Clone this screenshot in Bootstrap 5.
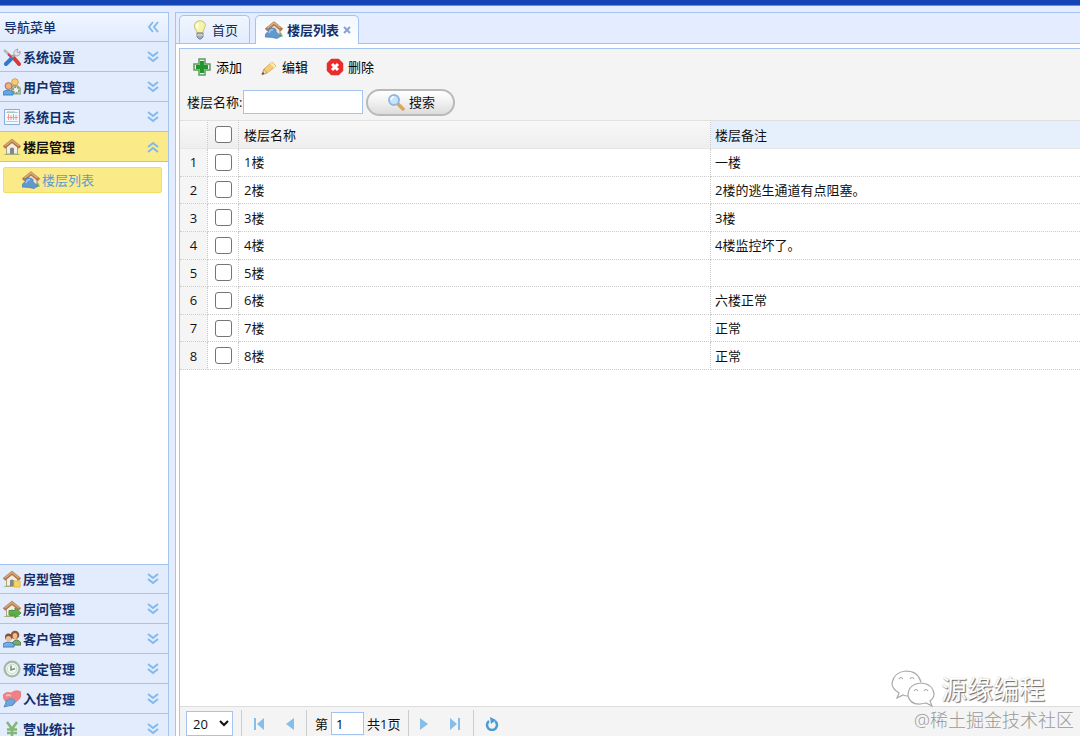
<!DOCTYPE html>
<html lang="zh-CN">
<head>
<meta charset="utf-8">
<meta name="viewport" content="width=device-width, initial-scale=1">
<title>楼层列表</title>
<link href="https://cdn.jsdelivr.net/npm/bootstrap@5.3.0/dist/css/bootstrap.min.css" rel="stylesheet">
<style>
  :root { --line: #a3c4ee; --sky: #e3edff; --navy: #12306b; }
  body { font: 13px/20px "Open Sans", "Noto Sans CJK SC", sans-serif; color: #111; background: var(--sky); }
  .app-shell { height: 100vh; }
  .top-strip { height: 6px; flex: none; background: #1346b4; border-bottom: 1px solid #6b8fd6; }
  .app-main { padding-top: 6px; gap: 6px; min-height: 0; margin-bottom: -9px; }
  svg { display: block; flex: none; }

  /* navigation */
  .side-nav { width: 169px; flex: none; border: 1px solid var(--line); border-left: 0; background: #fff; }
  .side-title, .side-item { height: 30px; width: 100%; padding: 0 9px 0 3px; border: 0; border-bottom: 1px solid var(--line); color: var(--navy); font-weight: 700; }
  .side-title { height: 29px; padding-left: 4px; background: linear-gradient(#f1f6ff, #e0ebfd); font-weight: 500; }
  .side-item { background: #e2ecfd; gap: 2px; font-weight: 600; }
  .side-item.open { background: #fbeb88; color: #111; }
  .side-last { border-top: 1px solid var(--line); }
  .side-body { padding: 5px 6px 0 3px; }
  .side-link { height: 26px; padding-left: 18px; gap: 2px; background: #fbeb88; border: 1px solid #f3de62; border-radius: 2px; color: #5b9bd0; text-decoration: none; }
  .chev { stroke: #82b9ee; fill: none; stroke-width: 2; }
  .icon-btn { border: 0; background: none; padding: 0; }

  /* tabs */
  .work { border: 1px solid var(--line); border-right: 0; background: #fff; min-width: 0; }
  .tab-strip { height: 31px; flex: none; padding: 2px 0 0 3px; gap: 5px; background: #e3edff; border-bottom: 1px solid var(--line); }
  .tab-strip .nav-link { height: 28px; border: 1px solid var(--line); border-bottom: 0; border-radius: 5px 5px 0 0; padding: 0 11px; gap: 3px; background: linear-gradient(#f1f6ff, #e2ecfd); color: #1a2a50; }
  .tab-strip .nav-link.active { height: 29px; margin-bottom: -1px; padding: 0 7px 0 9px; gap: 4px; background: linear-gradient(#f1f6ff, #fff); color: var(--navy); font-weight: 600; }
  .sheet { margin: 4px 0 0 3px; border: 1px solid var(--line); border-width: 1px 0 0 1px; min-height: 0; }

  /* toolbar */
  .tools { background: #f4f4f4; padding: 3px 7px; height: 71px; flex: none; }
  .tool-row { height: 30px; padding-left: 5px; gap: 18px; }
  .tool-row button { gap: 4px; }
  .find-row { height: 32px; gap: 3px; padding-top: 8px; }
  .find-row input { width: 120px; height: 24px; border: 1px solid var(--line); padding: 0 4px; margin-left: -2px; }
  .find-btn { width: 89px; height: 27px; border: 2px solid #b9b9b9; border-radius: 14px; background: linear-gradient(#fff, #f0f0f0 50%, #dcdcdc); gap: 4px; color: #111; }

  /* grid */
  .grid-table { width: 100%; height: 250px; table-layout: fixed; border-collapse: separate; border-spacing: 0; }
  .grid-table td, .grid-table th { padding: 0 5px; font-weight: 400; border-right: 1px dotted #ccc; border-bottom: 1px dotted #ccc; vertical-align: middle; line-height: 20px; }
  .grid-table tr > :last-child { border-right: 0; padding-left: 4px; }
  .grid-table thead th { height: 29px; background: linear-gradient(#f8f8f8, #eee); border-bottom: 1px solid #e6e6e6; border-top: 1px solid #e0e0e0; }
  .grid-table thead th.hot { background: #e6f0fd; }
  .grid-table .num { background: #f5f5f5; text-align: center; padding: 0; }
  .grid-table .tick { text-align: center; padding: 0; }
  .grid-table .form-check-input { width: 17px; height: 17px; margin: 0; display: block; margin-inline: auto; border: 1px solid #757575; border-radius: 3px; }
  .col-num { width: 28px; } .col-tick { width: 31px; } .col-name { width: 472px; }

  /* pager */
  .pager { height: 38px; flex: none; padding: 0 6px 4px; background: #f4f4f4; border-top: 1px solid #ddd; }
  .pager select { width: 47px; height: 25px; border: 1px solid var(--line); background: #fff; padding: 0 2px; font-size: 13px; color: #111; }
  .pager input { width: 33px; height: 23px; border: 1px solid var(--line); padding: 0 4px; margin: 0 3px; }
  .pager .rule { width: 1px; height: 27px; background: #ccc; margin: 0 8px; }
  .pager .step { padding: 0 4px; }
  .pager .rule + .step { padding-left: 3px; }
  .pager .step + .step { margin-left: 13px; }
  .pager svg { fill: #85bfe9; }

  .stamp { position: absolute; right: 6px; bottom: 4px; text-align: right; pointer-events: none; }
  .stamp-name { font-size: 26px; line-height: 36px; color: #fff; padding-right: 29px; gap: 6px; text-shadow: 1px 1px 1px #666, 0 0 1px #aaa; }
  .stamp-site { font-size: 18px; line-height: 24px; color: #999; font-weight: 300; }
</style>
</head>
<body>
<svg width="0" height="0" class="position-absolute" aria-hidden="true">
  <defs>
    <symbol id="down" viewBox="0 0 12 12"><path d="M1 1l5 4 5-4M1 6l5 4 5-4"/></symbol>
    <symbol id="up" viewBox="0 0 12 12"><path d="M1 6l5-4 5 4M1 11l5-4 5 4"/></symbol>
    <symbol id="home" viewBox="0 0 18 18">
      <path d="M0 17q9-5 18 0z" fill="#8bbf62"/>
      <path d="M3.500 8.500L9 4l5.500 4.500V16h-11z" fill="#f5efe3" stroke="#b39f8c"/>
      <path d="M7 10.500q2-2 4 0V16H7z" fill="#85858f"/>
      <path d="M1 9.500L9 3l8 6.500" fill="none" stroke="#ad7a4c" stroke-width="3.500"/>
      <path d="M2 8L9 2.500 16 8" fill="none" stroke="#d9a873" stroke-width="1.500"/>
    </symbol>
    <symbol id="homeblue" viewBox="0 0 18 18">
      <path d="M9 16.500l9-1-2-4z" fill="#79b56a"/>
      <path d="M4 8l6-5 5 5v7H4z" fill="#eee3d3" stroke="#9d8a80"/>
      <path d="M1 9L9 2.500 17 9" fill="none" stroke="#b07a4d" stroke-width="3.500"/>
      <path d="M2.500 7L9 2l6.500 5" fill="none" stroke="#dfae79" stroke-width="1.500"/>
      <path d="M0 16q0-4 3-5 0-5 4-4 5 0 4 4l5 4-4 2.500q-5-1.500-12-1.500z" fill="#6098d0" stroke="#4c7fb3" stroke-width=".7"/>
      <path d="M4 12q1-4 4-3" fill="none" stroke="#a6c9ec" stroke-width="1.500"/>
    </symbol>
  </defs>
</svg>
<div class="app-shell d-flex flex-column overflow-hidden position-relative">
  <div class="top-strip"></div>
  <div class="app-main d-flex flex-grow-1">
    <nav class="side-nav d-flex flex-column" aria-label="导航菜单">
      <div class="side-title d-flex align-items-center justify-content-between">
        <span>导航菜单</span>
        <button class="icon-btn" aria-label="收起"><svg class="chev" width="12" height="12" viewBox="0 0 12 12"><path d="M6 1L2 6l4 5M11 1L7 6l4 5"/></svg></button>
      </div>
      <button class="side-item d-flex align-items-center">
        <svg width="18" height="18" viewBox="0 0 18 18"><path d="M1 2l9 8" stroke="#b5b5bb" stroke-width="2.500"/><path d="M10 9l6 7" stroke="#d63c35" stroke-width="4" stroke-linecap="round"/><path d="M9 10l-6 6" stroke="#3478d0" stroke-width="4" stroke-linecap="round"/><path d="M5 6l3 3" stroke="#d63c35" stroke-width="2"/><path d="M11 7q-1-5 4-6l-1 3 2 1 1-2q1 5-4 5z" fill="#e4e4e4" stroke="#999" stroke-width=".8"/><path d="M9 9l3-2" stroke="#aaa" stroke-width="2"/></svg>
        <span>系统设置</span><svg class="chev ms-auto" width="12" height="12"><use href="#down"/></svg>
      </button>
      <button class="side-item d-flex align-items-center">
        <svg width="18" height="18" viewBox="0 0 18 18"><circle cx="12" cy="4" r="3.300" fill="#f4cd7a" stroke="#d5a24b"/><path d="M9 8q6-2 9 3v5H8z" fill="#b5c5a8" stroke="#8da080"/><circle cx="13" cy="12" r="3" fill="#eee" stroke="#789578" stroke-width="1.500" stroke-dasharray="2 1"/><circle cx="5.500" cy="8" r="3.400" fill="#eeb184" stroke="#b66e42"/><path d="M0 17v-3q5-4 10 0v3z" fill="#5da8e8" stroke="#3f83c3"/></svg>
        <span>用户管理</span><svg class="chev ms-auto" width="12" height="12"><use href="#down"/></svg>
      </button>
      <button class="side-item d-flex align-items-center">
        <svg width="18" height="18" viewBox="0 0 18 18"><path d="M1.500 1.500h15v15h-15z" fill="#f5f9ff" stroke="#86add7"/><path d="M3 4.500h12M3 13.500h12" stroke="#b8ccdd"/><path d="M5.500 6v6M8 7v5M10.500 6v6M13 7v5M4 9.500h11" stroke="#f09a94"/><path d="M4 4h8" stroke="#90c5a0"/></svg>
        <span>系统日志</span><svg class="chev ms-auto" width="12" height="12"><use href="#down"/></svg>
      </button>
      <button class="side-item open d-flex align-items-center" aria-expanded="true">
        <svg width="18" height="18"><use href="#home"/></svg>
        <span>楼层管理</span><svg class="chev ms-auto" width="12" height="12"><use href="#up"/></svg>
      </button>
      <div class="side-body flex-grow-1">
        <a class="side-link d-flex align-items-center" href="#floors"><svg width="18" height="18"><use href="#homeblue"/></svg>楼层列表</a>
      </div>
      <button class="side-item side-last d-flex align-items-center">
        <svg width="18" height="18" viewBox="0 0 18 18"><use href="#home" width="18" height="18"/><path d="M11 11h6v6h-6z" fill="#f7d560" stroke="#e8ba40"/></svg>
        <span>房型管理</span><svg class="chev ms-auto" width="12" height="12"><use href="#down"/></svg>
      </button>
      <button class="side-item d-flex align-items-center">
        <svg width="18" height="18" viewBox="0 0 18 18"><use href="#home" width="18" height="18"/><path d="M6 10.500h6V8l6 5-6 5v-3H6z" fill="#60ad4d" stroke="#4f9643"/></svg>
        <span>房问管理</span><svg class="chev ms-auto" width="12" height="12"><use href="#down"/></svg>
      </button>
      <button class="side-item d-flex align-items-center">
        <svg width="18" height="18" viewBox="0 0 18 18"><path d="M9 13q5-6 9 0v2H9z" fill="#77ad67" stroke="#557d4c"/><circle cx="12" cy="5" r="4.300" fill="#925a34"/><ellipse cx="12" cy="6" rx="2.300" ry="3" fill="#efbd90"/><circle cx="5.500" cy="7" r="3.500" fill="#79543c"/><circle cx="5.500" cy="8.500" r="2.600" fill="#f0bd95"/><path d="M0 17v-3q5-4 11 0v3z" fill="#73aee8" stroke="#427eba"/></svg>
        <span>客户管理</span><svg class="chev ms-auto" width="12" height="12"><use href="#down"/></svg>
      </button>
      <button class="side-item d-flex align-items-center">
        <svg width="18" height="18" viewBox="0 0 18 18"><circle cx="9" cy="9" r="7.400" fill="#f3f8f2" stroke="#a3b8a6" stroke-width="2.200"/><circle cx="9" cy="9" r="4.800" fill="none" stroke="#c8d7ca"/><path d="M8 5.500V10l4-1.500" fill="none" stroke="#74907e" stroke-width="1.500"/></svg>
        <span>预定管理</span><svg class="chev ms-auto" width="12" height="12"><use href="#down"/></svg>
      </button>
      <button class="side-item d-flex align-items-center">
        <svg width="18" height="18" viewBox="0 0 18 18"><path d="M0 5q3-4 8-2 5-4 10-1 1 6-4 9l-5 5Q0 12 0 5z" fill="#f08083" stroke="#e1757a" stroke-width=".7"/><path d="M3 6q2-2 5 0" stroke="#f9b6b0" stroke-width="2" fill="none"/><path d="M1 17l3-7q5-3 8 1l-2 4-5 1z" fill="#6aa7df" stroke="#5b91c8"/></svg>
        <span>入住管理</span><svg class="chev ms-auto" width="12" height="12"><use href="#down"/></svg>
      </button>
      <button class="side-item d-flex align-items-center">
        <svg width="18" height="18" viewBox="0 0 18 18"><path d="M4 2l5 7 5-7M9 9v8M4 9.500h10M4 13h10" fill="none" stroke="#83b576" stroke-width="2.500"/></svg>
        <span>营业统计</span><svg class="chev ms-auto" width="12" height="12"><use href="#down"/></svg>
      </button>
    </nav>

    <main class="work d-flex flex-column flex-grow-1">
      <div class="tab-strip nav align-items-end flex-nowrap" role="tablist">
        <button class="nav-link d-flex align-items-center" role="tab">
          <svg width="18" height="20" viewBox="0 0 18 20"><path d="M6 13q0-2-2-4-2-4 1-7 4-3 8 0 3 3 0 7-1 2-1 4z" fill="#f7f4a5" stroke="#c5c383"/><path d="M7 4q-2 2 0 4" fill="none" stroke="#fff" stroke-width="2"/><path d="M6 13h6v4l-2 2H8l-2-2z" fill="#a4abb5" stroke="#7b838e"/><path d="M6 15h6" stroke="#e0e4e9"/></svg>首页</button>
        <button class="nav-link active d-flex align-items-center" role="tab" aria-selected="true">
          <svg width="18" height="18"><use href="#homeblue"/></svg>楼层列表
          <svg width="8" height="8" viewBox="0 0 8 8"><path d="M1 1l6 6M7 1L1 7" stroke="#86a3d0" stroke-width="2"/></svg></button>
      </div>
      <section class="sheet d-flex flex-column flex-grow-1" id="floors">
        <div class="tools">
          <div class="tool-row d-flex align-items-center">
            <button class="icon-btn d-flex align-items-center"><svg width="20" height="18" viewBox="0 0 20 18"><path d="M7 1h6v5h5v6h-5v5H7v-5H2V6h5z" fill="#eaf5e7" stroke="#5d9b62" stroke-width="1.500"/><path d="M10 3v12M4 9h12" stroke="#22962b" stroke-width="4"/></svg>添加</button>
            <button class="icon-btn d-flex align-items-center"><svg width="18" height="18" viewBox="0 0 18 18"><path d="M2 16l2-5 8-7 4 4-9 7z" fill="#f5cd73" stroke="#d9b069"/><path d="M4 11l3 4-5 2z" fill="#f1d5b3" stroke="#b39168" stroke-width=".7"/><path d="M11 5l4 4" stroke="#fff0b8" stroke-width="2"/><path d="M2 16l2-1" stroke="#555" stroke-width="1.500"/></svg>编辑</button>
            <button class="icon-btn d-flex align-items-center"><svg width="18" height="18" viewBox="0 0 18 18"><path d="M5.500 1.500h7l4 4v7l-4 4h-7l-4-4v-7z" fill="#ef2929" stroke="#e03030" stroke-width="1.500" stroke-linejoin="round"/><path d="M6 6l6 6M12 6l-6 6" stroke="#fff" stroke-width="3"/></svg>删除</button>
          </div>
          <form class="find-row d-flex align-items-center" onsubmit="return false">
            <label for="fname">楼层名称:</label>
            <input id="fname" type="text">
            <button class="find-btn d-flex align-items-center justify-content-center"><svg width="18" height="18" viewBox="0 0 18 18"><path d="M10 10l6 6" stroke="#d9a662" stroke-width="3.500" stroke-linecap="round"/><circle cx="7" cy="7" r="5" fill="#c6e5fb" stroke="#94b8dc" stroke-width="2"/><path d="M4 7q0-3 3-3" fill="none" stroke="#fff" stroke-width="1.500"/></svg>搜索</button>
          </form>
        </div>
        <div class="flex-grow-1 overflow-hidden">
          <table class="grid-table">
            <colgroup><col class="col-num"><col class="col-tick"><col class="col-name"><col></colgroup>
            <thead><tr><th></th><th class="tick"><input class="form-check-input" type="checkbox" aria-label="全选"></th><th>楼层名称</th><th class="hot">楼层备注</th></tr></thead>
            <tbody>
              <tr><td class="num">1</td><td class="tick"><input class="form-check-input" type="checkbox" aria-label="1楼"></td><td>1楼</td><td>一楼</td></tr>
              <tr><td class="num">2</td><td class="tick"><input class="form-check-input" type="checkbox" aria-label="2楼"></td><td>2楼</td><td>2楼的逃生通道有点阻塞。</td></tr>
              <tr><td class="num">3</td><td class="tick"><input class="form-check-input" type="checkbox" aria-label="3楼"></td><td>3楼</td><td>3楼</td></tr>
              <tr><td class="num">4</td><td class="tick"><input class="form-check-input" type="checkbox" aria-label="4楼"></td><td>4楼</td><td>4楼监控坏了。</td></tr>
              <tr><td class="num">5</td><td class="tick"><input class="form-check-input" type="checkbox" aria-label="5楼"></td><td>5楼</td><td></td></tr>
              <tr><td class="num">6</td><td class="tick"><input class="form-check-input" type="checkbox" aria-label="6楼"></td><td>6楼</td><td>六楼正常</td></tr>
              <tr><td class="num">7</td><td class="tick"><input class="form-check-input" type="checkbox" aria-label="7楼"></td><td>7楼</td><td>正常</td></tr>
              <tr><td class="num">8</td><td class="tick"><input class="form-check-input" type="checkbox" aria-label="8楼"></td><td>8楼</td><td>正常</td></tr>
            </tbody>
          </table>
        </div>
        <div class="pager d-flex align-items-center">
          <select aria-label="每页条数"><option>20</option></select>
          <span class="rule"></span>
          <button class="icon-btn step" aria-label="首页"><svg width="12" height="12" viewBox="0 0 12 12"><path d="M1 0h2v12H1zM11 0v12L4 6z"/></svg></button>
          <button class="icon-btn step" aria-label="上一页"><svg width="8" height="12" viewBox="0 0 8 12"><path d="M8 0v12L0 6z"/></svg></button>
          <span class="rule"></span>
          <label for="pageno">第</label><input id="pageno" type="text" value="1"><span>共1页</span>
          <span class="rule"></span>
          <button class="icon-btn step" aria-label="下一页"><svg width="8" height="12" viewBox="0 0 8 12"><path d="M0 0v12l8-6z"/></svg></button>
          <button class="icon-btn step" aria-label="末页"><svg width="12" height="12" viewBox="0 0 12 12"><path d="M9 0h2v12H9zM1 0v12l7-6z"/></svg></button>
          <span class="rule"></span>
          <button class="icon-btn step" aria-label="刷新"><svg width="14" height="14" viewBox="0 0 14 14"><path d="M4 4a5 5 0 1 0 6 0" fill="none" stroke="#4d9bd3" stroke-width="2.500"/><path d="M5 0l6 3-5 4z" fill="#4d9bd3"/></svg></button>
        </div>
      </section>
    </main>
  </div>
  <div class="stamp">
    <div class="stamp-name d-flex align-items-center justify-content-end">
      <svg width="44" height="38" viewBox="0 0 44 38" fill="#fff" stroke="#aaa" stroke-width="1.200"><path d="M17 26q-3 0-5-1l-6 3 2-5Q1 19 1 13 3 2 15 1q12 0 15 11"/><path d="M8 9q2-3 4 0M19 9q2-3 4 0" fill="none"/><path d="M39 31l2 5-6-3q-15 4-18-7 0-12 13-13 12 1 13 11 0 4-4 7z"/><path d="M23 21q2-3 4 0M33 21q2-3 4 0" fill="none"/></svg>
      <span>源缘编程</span>
    </div>
    <div class="stamp-site">@稀土掘金技术社区</div>
  </div>
</div>
<script src="https://cdn.jsdelivr.net/npm/bootstrap@5.3.0/dist/js/bootstrap.bundle.min.js"></script>
</body>
</html>
